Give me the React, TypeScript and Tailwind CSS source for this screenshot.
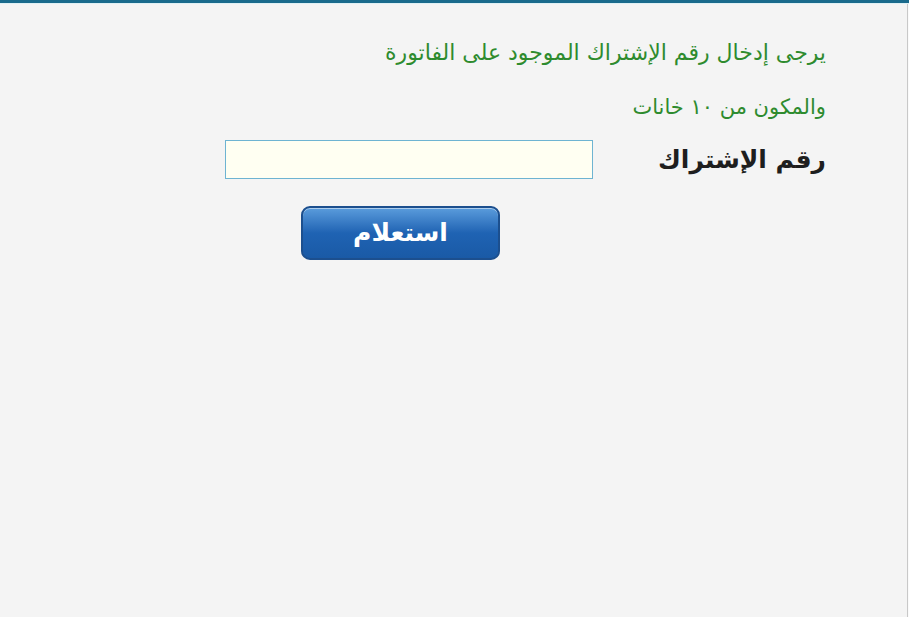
export default function App() {
  return (
    <div
      dir="rtl"
      className="w-[909px] h-[617px] bg-[#f4f4f4] flex flex-col overflow-hidden"
      style={{ fontFamily: '"DejaVu Sans", "Noto Sans", sans-serif' }}
    >
      <div className="h-[3px] bg-[#1a6a8c] shrink-0" />
      <div className="h-[1px] bg-[#dff0f4] shrink-0" />
      <div className="flex-1 flex">
        <div className="w-[1px] bg-[#fafafa]" />
        <div className="w-[1px] bg-[#c8c8c8]" />
        <div className="flex-1 pr-[81px] pt-[34px]">
          <p className="text-[22px] leading-[30px] text-[#2e8b2e] whitespace-nowrap">
            يرجى إدخال رقم الإشتراك الموجود على الفاتورة
          </p>
          <p className="text-[21px] leading-[30px] text-[#2e8b2e] mt-[24px] whitespace-nowrap">
            والمكون من ١٠ خانات
          </p>
          <div className="flex items-center mt-[18px]">
            <label className="text-[25px] font-bold text-[#1e1e1e] w-[233px] whitespace-nowrap leading-[39px]">
              رقم الإشتراك
            </label>
            <input
              type="text"
              className="w-[368px] h-[39px] bg-[#fffff2] border border-[#6eb4d2] outline-none"
            />
          </div>
          <div className="flex mt-[27px] mr-[326px]">
            <button className="w-[199px] h-[54px] rounded-[9px] border-2 border-[#1c4f8e] bg-gradient-to-b from-[#5a9cdc] via-[#1f63b3] to-[#1a5aa6] text-white text-[25px] font-bold shadow-[inset_0_1px_0_rgba(255,255,255,0.5)]">
              استعلام
            </button>
          </div>
        </div>
      </div>
    </div>
  );
}
